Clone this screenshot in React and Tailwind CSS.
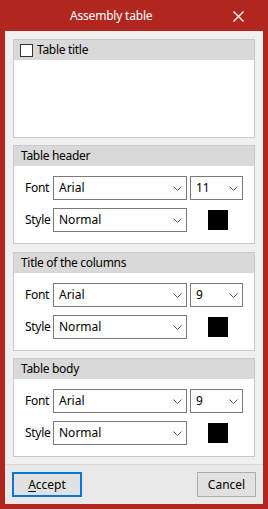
import { useState } from 'react';

const FONT = { fontFamily: '"Segoe UI", "Noto Sans", "Open Sans", sans-serif' };

function Chevron() {
  return (
    <svg width="9" height="5" viewBox="0 0 9 5" className="shrink-0">
      <path d="M0.5 0.5 L4.5 4.5 L8.5 0.5" fill="none" stroke="#606060" strokeWidth="1" />
    </svg>
  );
}

function Combo({ value, className = '' }) {
  return (
    <div
      className={`flex h-[24px] items-center justify-between border border-[#7a7a7a] bg-white pl-[5px] pr-[4px] text-[12px] text-black ${className}`}
    >
      <span>{value}</span>
      <Chevron />
    </div>
  );
}

function FontGroup({ title, size, className = '' }) {
  return (
    <div className={`h-[99px] border border-[#cacaca] bg-white ${className}`}>
      <div className="h-[20px] bg-[#d9d9d9] pl-[7px] text-[12px] leading-[19px] tracking-[-0.3px] text-black">
        {title}
      </div>
      <div className="flex flex-col gap-[8px] pl-[11px] pt-[10px]">
        <div className="flex items-center">
          <span className="w-[28px] text-[12px] tracking-[-0.3px]">Font</span>
          <Combo value="Arial" className="w-[134px]" />
          <Combo value={size} className="ml-[3px] w-[53px]" />
        </div>
        <div className="flex items-center">
          <span className="w-[28px] text-[12px] tracking-[-0.3px]">Style</span>
          <Combo value="Normal" className="w-[134px]" />
          <div className="ml-[21px] h-[20px] w-[20px] bg-black" />
        </div>
      </div>
    </div>
  );
}

export default function App() {
  const [checked, setChecked] = useState(false);

  return (
    <div style={FONT} className="flex h-[509px] w-[268px] flex-col bg-[#b1271f] text-black">
      <div className="flex h-[31px] shrink-0 items-center">
        <span className="ml-[70px] text-[12px] tracking-[-0.2px] text-white">Assembly table</span>
        <svg width="11" height="11" viewBox="0 0 11 11" className="ml-auto mr-[24px] mt-[2px]">
          <path d="M0.5 0.5 L10.5 10.5 M10.5 0.5 L0.5 10.5" stroke="white" strokeWidth="1.4" />
        </svg>
      </div>

      <div className="mx-[5px] mb-[5px] flex flex-1 flex-col bg-[#f0f0f0]">
        <div className="flex flex-1 flex-col px-[8px] pt-[8px]">
          <div className="h-[99px] border border-[#cacaca] bg-white">
            <label className="flex h-[20px] items-center gap-[4px] bg-[#d9d9d9] pl-[6px] text-[12px] tracking-[-0.3px]">
              <button
                type="button"
                onClick={() => setChecked((v) => !v)}
                className="flex h-[13px] w-[13px] items-center justify-center border border-[#333333] bg-white"
              >
                {checked && (
                  <svg width="9" height="9" viewBox="0 0 9 9">
                    <path d="M1 4.5 L3.5 7 L8 1.5" fill="none" stroke="#000" strokeWidth="1.2" />
                  </svg>
                )}
              </button>
              Table title
            </label>
          </div>

          <FontGroup title="Table header" size="11" className="mt-[7px]" />
          <FontGroup title="Title of the columns" size="9" className="mt-[8px]" />
          <FontGroup title="Table body" size="9" className="mt-[7px]" />
        </div>

        <div className="flex h-[40px] shrink-0 items-start justify-between border-t border-[#dadada] bg-[#e9e9e9] px-[7px] pt-[7px]">
          <button
            type="button"
            className="h-[25px] w-[70px] border-2 border-[#0078d7] bg-[#e1e1e1] text-[12px]"
          >
            <span className="underline underline-offset-2">A</span>ccept
          </button>
          <button
            type="button"
            className="h-[25px] w-[59px] border border-[#adadad] bg-[#e1e1e1] text-[12px]"
          >
            Cancel
          </button>
        </div>
      </div>
    </div>
  );
}
